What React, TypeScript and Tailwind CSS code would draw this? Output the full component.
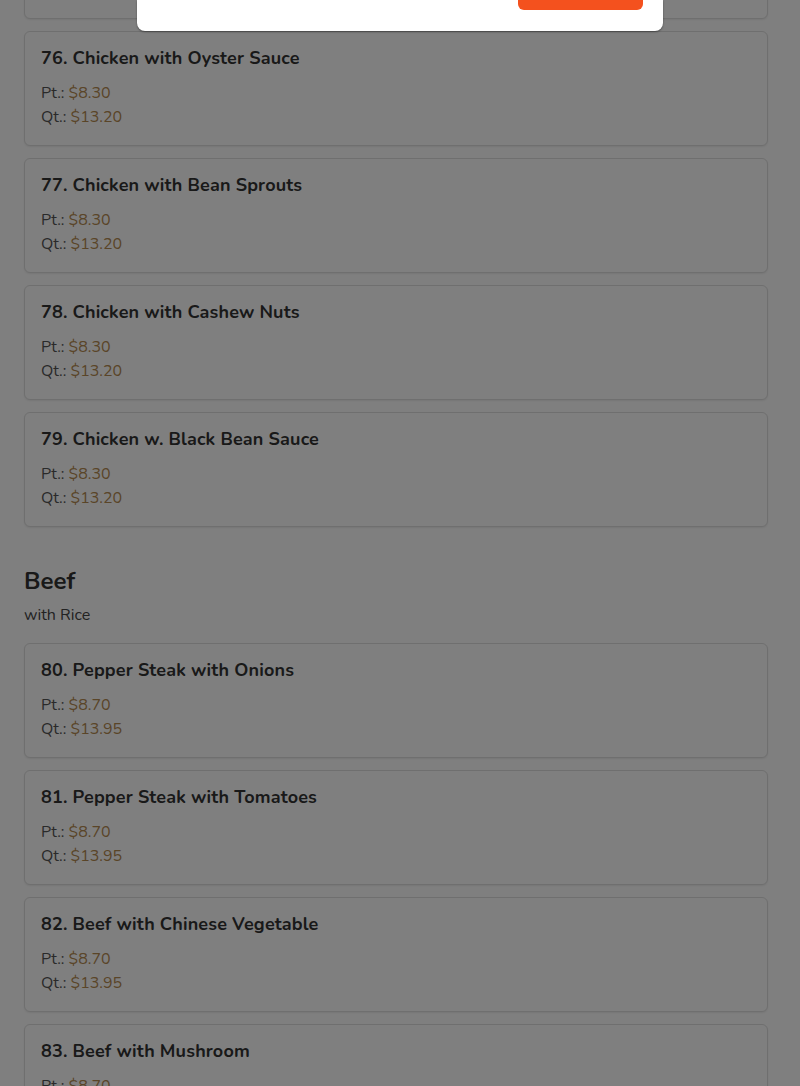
type Item = { no: number; name: string; pt: string; qt: string };

const chicken: Item[] = [
  { no: 76, name: "Chicken with Oyster Sauce", pt: "$8.30", qt: "$13.20" },
  { no: 77, name: "Chicken with Bean Sprouts", pt: "$8.30", qt: "$13.20" },
  { no: 78, name: "Chicken with Cashew Nuts", pt: "$8.30", qt: "$13.20" },
  { no: 79, name: "Chicken w. Black Bean Sauce", pt: "$8.30", qt: "$13.20" },
];

const beef: Item[] = [
  { no: 80, name: "Pepper Steak with Onions", pt: "$8.70", qt: "$13.95" },
  { no: 81, name: "Pepper Steak with Tomatoes", pt: "$8.70", qt: "$13.95" },
  { no: 82, name: "Beef with Chinese Vegetable", pt: "$8.70", qt: "$13.95" },
  { no: 83, name: "Beef with Mushroom", pt: "$8.70", qt: "$13.95" },
];

function MenuCard({ item }: { item: Item }) {
  return (
    <div className="h-[115px] rounded-md border border-[#dedede] bg-white px-4 pt-[14px] shadow-[0_1px_2px_rgba(0,0,0,0.08)]">
      <h3 className="text-[18px] font-bold leading-[24px] tracking-[0.15px] text-[#333]">
        {item.no}. {item.name}
      </h3>
      <div className="mt-[11px] text-[16px] leading-[24px] text-[#555]">
        <p>
          Pt.: <span className="text-[#b48a50]">{item.pt}</span>
        </p>
        <p>
          Qt.: <span className="text-[#b48a50]">{item.qt}</span>
        </p>
      </div>
    </div>
  );
}

export default function App() {
  return (
    <div className="relative h-[1086px] overflow-hidden bg-white font-['Nunito','Lato','Noto_Sans',sans-serif]">
      <div className="ml-6 mt-[-96px] flex w-[744px] flex-col gap-3">
        {/* previous item, scrolled out of view */}
        <div className="h-[115px] rounded-md border border-[#dedede] bg-white shadow-[0_1px_2px_rgba(0,0,0,0.08)]" />
        {chicken.map((item) => (
          <MenuCard key={item.no} item={item} />
        ))}
      </div>

      <section className="ml-6 mt-[38px] w-[744px]">
        <h2 className="text-[24px] font-bold leading-[32px] text-[#333]">Beef</h2>
        <p className="mt-[6px] text-[16px] leading-[24px] text-[#444]">with Rice</p>
        <div className="mt-[16px] flex flex-col gap-3">
          {beef.map((item) => (
            <MenuCard key={item.no} item={item} />
          ))}
        </div>
      </section>

      {/* modal backdrop */}
      <div className="absolute inset-0 bg-black/50" />

      <div className="absolute left-[137px] top-0 h-[31px] w-[526px] rounded-b-lg bg-white shadow-[0_1px_2px_rgba(0,0,0,0.4)]">
        <button
          type="button"
          className="absolute right-5 top-0 h-[10px] w-[125px] rounded-b-md bg-[#f4511e]"
        />
      </div>
    </div>
  );
}
